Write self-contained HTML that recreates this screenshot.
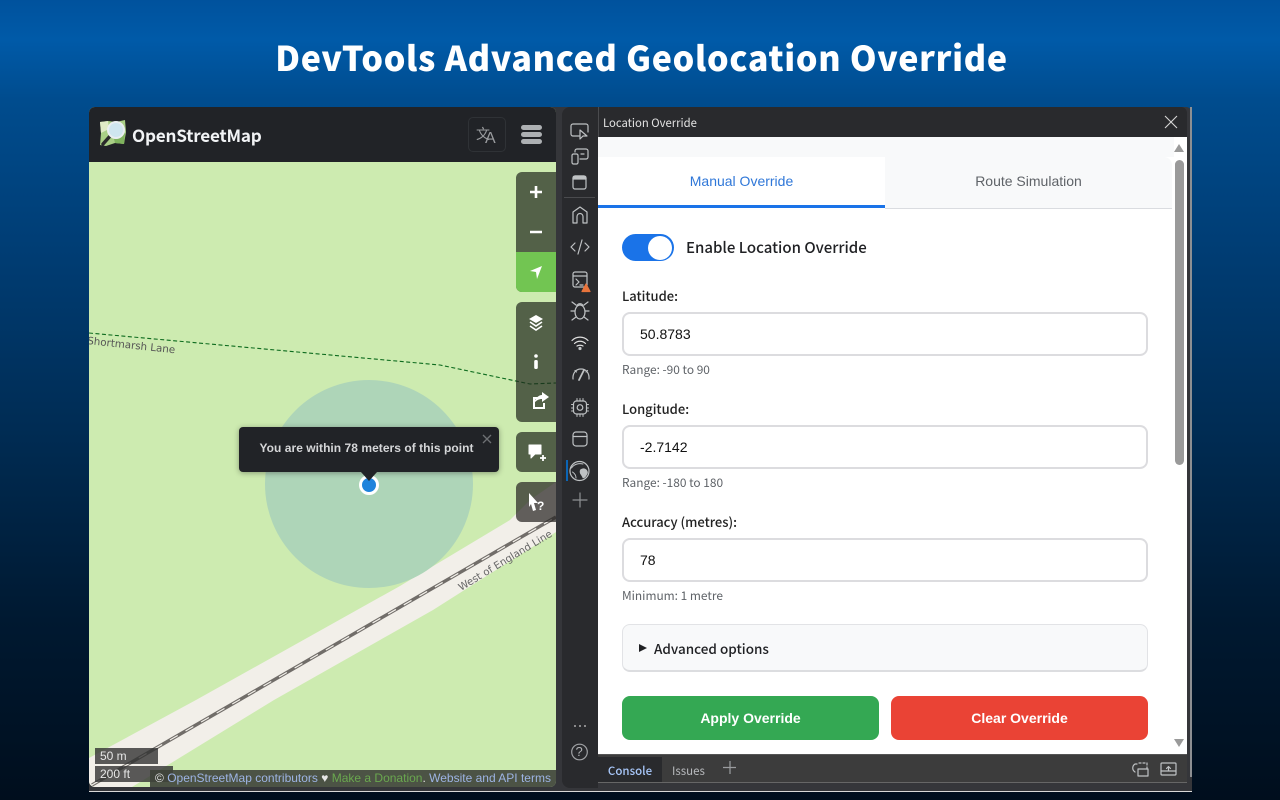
<!DOCTYPE html>
<html><head><meta charset="utf-8"><title>DevTools Advanced Geolocation Override</title>
<style>
*{box-sizing:border-box;margin:0;padding:0}
html,body{width:1280px;height:800px;overflow:hidden}
body{position:relative;font-family:"Liberation Sans",sans-serif;background:linear-gradient(180deg,#00529d 0,#005aa8 40px,#004c8e 100px,#003d74 250px,#002a50 450px,#001931 620px,#000e1d 800px)}
.a{position:absolute}
h1{position:absolute;left:0;width:1283px;top:35px;text-align:center;color:#fff;font:900 34px/44px "Noto Sans CJK SC","Liberation Sans",sans-serif;letter-spacing:.7px}
.seg{font-family:"Noto Sans CJK SC","Liberation Sans",sans-serif}
.ctl{position:absolute;left:516px;width:40px;background:rgba(32,38,28,.7);border-radius:6px 0 0 6px}
.inp{position:absolute;left:622px;width:526px;height:44px;border:2px solid #dcdcdf;border-radius:8px;background:#fff;font-size:14px;line-height:40px;padding-left:16px;color:#111}
.lbl{position:absolute;left:622px;font:500 13px/18px "Noto Sans CJK SC","Liberation Sans",sans-serif;color:#222}
.hint{position:absolute;left:622px;font:400 11.9px/16px "Noto Sans CJK SC","Liberation Sans",sans-serif;color:#5f6368}
.btn{position:absolute;top:696px;height:44px;width:257px;border-radius:8px;color:#fff;font:700 14px/44px "Liberation Sans",sans-serif;text-align:center}
svg{position:absolute;overflow:visible}
.ic{fill:none;stroke:#bfc2c4;stroke-width:1.2;stroke-linecap:round;stroke-linejoin:round}
</style></head><body>
<h1>DevTools Advanced Geolocation Override</h1>

<div class="a" style="left:89px;top:107px;width:1103px;height:685px;background:#35363a;border-radius:6px 6px 0 0"></div>
<div class="a" style="left:89px;top:791px;width:1103px;height:1px;background:#d8d8d8"></div>
<div class="a" style="left:1190px;top:107px;width:2px;height:670px;background:#8d8f92"></div>

<!-- Map -->
<div class="a" style="left:89px;top:107px;width:467px;height:680px;background:#cdebb0;border-radius:6px;overflow:hidden">
 <svg width="467" height="680" style="left:0;top:0">
  <g transform="translate(-89,-107)">
   <polygon points="89,758 196,700 400,586 510,520 530,500 556,482 556,532 433,610 274,700 132,787 89,800" fill="#f2efe9"/>
   <circle cx="369" cy="484" r="104" fill="#aed5b8"/>
   <path d="M92 785L556 517" stroke="#716d69" stroke-width="3.400" fill="none"/>
   <path d="M92 785L556 517" stroke="#f2efe9" stroke-width="1.200" stroke-dasharray="9 9" fill="none"/>
   <path d="M89 333L440 365L530 384L556 383" stroke="#0d6b1e" stroke-width="1.100" stroke-dasharray="4 2.500" fill="none"/>
   <text x="0" y="0" transform="translate(87,344) rotate(6)" font-family="DejaVu Sans" font-size="10.300" fill="#555">Shortmarsh Lane</text>
   <text x="0" y="0" transform="translate(461,591) rotate(-31)" font-family="DejaVu Sans" font-size="10.200" fill="#666">West of England Line</text>
  </g>
 </svg>
</div>

<!-- OSM header -->
<div class="a" style="left:89px;top:107px;width:467px;height:55px;background:#212327;border-radius:6px 6px 0 0"></div>
<svg width="30" height="30" style="left:98px;top:119px">
 <path d="M2 3L10 2L18 3L27 1L28 13L26 25L17 24L8 27L2 26L3 14Z" fill="#a9cf86"/>
 <path d="M2 3L10 2L11 10L3 14Z" fill="#dfeac6"/><path d="M16 20L27 14L26 25L17 24Z" fill="#7fb35e"/>
 <path d="M13 16L5 25" stroke="#2a2a2a" stroke-width="3.400" stroke-linecap="round"/>
 <circle cx="18" cy="11" r="8" fill="#cfe6ef" stroke="#e9eef0" stroke-width="2"/>
</svg>
<div class="a seg" style="left:132px;top:122px;font-size:17.100px;line-height:26px;font-weight:700;color:#f1f3f5;letter-spacing:-.2px">OpenStreetMap</div>
<div class="a" style="left:468px;top:117px;width:38px;height:35px;border:1px solid #2f3236;border-radius:5px"></div>
<div class="a" style="left:476px;top:125px;font:14px/18px 'Noto Sans CJK SC',sans-serif;color:#9a9c9f">文</div>
<div class="a" style="left:485px;top:130px;font:16px/18px 'Liberation Sans',sans-serif;color:#9a9c9f">A</div>
<div class="a" style="left:521px;top:125px;width:21px;height:5px;border-radius:3px;background:#adb0b3"></div>
<div class="a" style="left:521px;top:132px;width:21px;height:5px;border-radius:3px;background:#adb0b3"></div>
<div class="a" style="left:521px;top:139px;width:21px;height:5px;border-radius:3px;background:#adb0b3"></div>

<!-- Map controls -->
<div class="ctl" style="top:172px;height:120px"></div>
<div class="a" style="left:516px;top:252px;width:40px;height:40px;background:#72c552;border-radius:0 0 0 6px"></div>
<div class="ctl" style="top:302px;height:120px"></div>
<div class="ctl" style="top:432px;height:40px"></div>
<div class="ctl" style="top:482px;height:40px;background:rgba(40,38,36,.72)"></div>
<svg width="40" height="350" style="left:516px;top:172px">
 <path d="M20 14V26M14 20H26M14 60H26" stroke="#fff" stroke-width="2.600" fill="none"/>
 <path d="M14 99L26 94L21 107L20 100Z" fill="#fff"/>
 <path d="M20 143L27 147L20 151L13 147Z" fill="#fff"/>
 <path d="M14 150L20 154L26 150M14 154L20 158L26 154" stroke="#fff" stroke-width="1.600" fill="none"/>
 <circle cx="20" cy="184" r="1.800" fill="#fff"/><rect x="18.200" y="188" width="3.600" height="9" rx="1.500" fill="#fff"/>
 <path d="M24 226H18V236H28V231" stroke="#fff" stroke-width="2" fill="none"/>
 <path d="M18 231C19 226 23 223 26 223V220L33 225L26 230V227C23 227 21 228 18 231Z" fill="#fff"/>
 <path d="M13 273H25V282H19L15 286V282H13Z" fill="#fff" stroke="#fff" stroke-linejoin="round"/>
 <path d="M27 283V289M24 286H30" stroke="#fff" stroke-width="1.800"/>
 <path d="M13 321L22 331L18 331L20 338L17 339L15 332L13 335Z" fill="#fff"/>
 <text x="21" y="338" font-size="12" font-weight="700" fill="#fff" font-family="Liberation Sans">?</text>
</svg>

<!-- Popup -->
<div class="a" style="left:239px;top:427px;width:260px;height:45px;background:#212327;border-radius:4px;box-shadow:0 1px 6px rgba(0,0,0,.35);color:#d5d6d8;font:700 12px/43px 'Liberation Sans',sans-serif;text-align:center;padding-right:5px;letter-spacing:.04px">You are within 78 meters of this point</div>
<svg width="10" height="10" style="left:483px;top:435px"><path d="M0 0L8 8M8 0L0 8" stroke="#6d7073" stroke-width="1.300"/></svg>
<div class="a" style="left:359px;top:475px;width:20px;height:20px;border-radius:50%;background:#1f83dc;border:3px solid #fff"></div>
<div class="a" style="left:361px;top:472px;width:0;height:0;border-left:8px solid transparent;border-right:8px solid transparent;border-top:9px solid #212327"></div>

<!-- Scale & attribution -->
<div class="a" style="left:95px;top:748px;width:63px;height:16px;background:rgba(50,50,50,.8);color:#e6e6e6;font:12px/16px 'Liberation Sans',sans-serif;padding-left:5px">50 m</div>
<div class="a" style="left:95px;top:766px;width:78px;height:16px;background:rgba(50,50,50,.8);color:#e6e6e6;font:12px/16px 'Liberation Sans',sans-serif;padding-left:5px">200 ft</div>
<div class="a" style="left:150px;top:770px;width:406px;height:17px;background:rgba(62,66,58,.9);border-radius:0 0 6px 0;font:12px/16px 'Liberation Sans',sans-serif;color:#e6e6e6;white-space:nowrap;padding-left:5px">© <span style="color:#9db4e4">OpenStreetMap contributors</span> ♥ <span style="color:#6aa84f">Make a Donation</span>. <span style="color:#9db4e4">Website and API terms</span></div>

<!-- DevTools sidebar -->
<div class="a" style="left:562px;top:107px;width:36px;height:681px;background:#292a2d;border-radius:8px 0 0 8px"></div>
<div class="a" style="left:564px;top:197px;width:31px;height:1px;background:#4a4b4e"></div>
<svg width="36" height="680" style="left:562px;top:107px" class="ic">
 <path d="M17 29H11a2 2 0 0 1-2-2V19a2 2 0 0 1 2-2H24a2 2 0 0 1 2 2V25"/><path d="M18 23L18 32L21 29L25 29Z"/>
 <path d="M13 45V44a2 2 0 0 1 2-2H24a2 2 0 0 1 2 2V50a2 2 0 0 1-2 2H18"/><rect x="10" y="47" width="6" height="10" rx="1.500"/><path d="M19 47H22"/>
 <rect x="11" y="69" width="13" height="13" rx="2"/><path d="M11 71a2 2 0 0 1 2-2H22a2 2 0 0 1 2 2V72H11Z" fill="#bfc2c4"/>
 <path d="M11 116V105L18 100L25 105V116H21V109.500a3 3 0 0 0-6 0V116Z"/>
 <path d="M13 136L9 140L13 144M23 136L27 140L23 144M20 133L16 147"/>
 <rect x="11" y="165" width="14" height="15" rx="2"/><path d="M11 169H25M14 172L17 175L14 178M18 178H21"/>
 <path d="M24 177L28 184.500H20Z" fill="#e8743c" stroke="#e8743c"/>
 <ellipse cx="18" cy="205" rx="5" ry="7"/><path d="M14 198L10 195M22 198L26 195M13 204H9M23 204H27M14 210L10 213M22 210L26 213M15 199C15 196 21 196 21 199"/>
 <path d="M10 233.500C14.500 229 21.500 229 26 233.500M12.500 236.500C15.500 233.500 20.500 233.500 23.500 236.500M15 239C16.500 238 19.500 238 21 239" stroke="#e0e0e0"/><circle cx="18" cy="241.500" r="1" fill="#e0e0e0"/>
 <path d="M11 272C10.500 266 14 262 19 262C24 262 27.500 266 27 272M14.500 265L13 263.500M24 265L25.500 263.500"/>
 <path d="M22 263L17 273" stroke-width="1.800"/>
 <rect x="11.500" y="294" width="13" height="13" rx="3"/><circle cx="18" cy="300.500" r="2.800"/><path d="M15 291.500V294M18 291.500V294M21 291.500V294M15 307V309.500M18 307V309.500M21 307V309.500M9.500 297.500H11.500M9.500 301H11.500M9.500 304H11.500M24.500 297.500H26.500M24.500 301H26.500M24.500 304H26.500" stroke-width="1"/>
 <rect x="11" y="325" width="14" height="14" rx="3"/><path d="M11 329.500H25"/>
 <circle cx="17.500" cy="364" r="9.500"/>
 <path d="M9.500 361C12 357 17 356 21 357" stroke-width="1"/>
 <path d="M20 362C23 361 25.500 363 25.500 366C24 369 23 371 21 371C20 368 18 367 18 365C18 363 19 362 20 362Z" fill="#bfc2c4" stroke-width=".6"/>
 <path d="M10.500 365C12 366 14 368 14 371" stroke-width="1"/>
 <path d="M18 386V400M11 393H25" stroke="#8f9194"/>
 <circle cx="13" cy="619" r=".9" fill="#d0d0d0" stroke="none"/><circle cx="18" cy="619" r=".9" fill="#d0d0d0" stroke="none"/><circle cx="23" cy="619" r=".9" fill="#d0d0d0" stroke="none"/>
 <circle cx="17.500" cy="645" r="7.800" stroke="#a0a2a5"/>
</svg>
<div class="a" style="left:566px;top:460px;width:2px;height:21px;background:#0b65b5"></div>
<div class="a" style="left:575.500px;top:745px;font:13px/14px 'Liberation Sans',sans-serif;color:#b0b2b5">?</div>

<!-- DevTools header -->
<div class="a" style="left:598px;top:107px;width:589px;height:30px;background:#292a2d;border-left:1px solid #4a4b4e;color:#e3e3e3;font:11.300px/32px 'Noto Sans CJK SC','Liberation Sans',sans-serif;padding-left:4px;border-radius:0 6px 0 0">Location Override</div>
<svg width="14" height="14" style="left:1164px;top:115px"><path d="M1 1L13 13M13 1L1 13" stroke="#d6d6d6" stroke-width="1.100"/></svg>

<!-- Panel content -->
<div class="a" style="left:598px;top:137px;width:589px;height:617px;background:#fff"></div>
<div class="a" style="left:598px;top:137px;width:576px;height:20px;background:#f8f9fa"></div>
<div class="a" style="left:598px;top:157px;width:287px;height:51px;background:#fff;border-bottom:3px solid #1a73e8;border-radius:8px 0 0 0;color:#2f77d8;font:14px/48px 'Liberation Sans',sans-serif;text-align:center">Manual Override</div>
<div class="a" style="left:885px;top:157px;width:287px;height:52px;background:#f8f9fa;border-bottom:1px solid #dadce0;border-radius:0 8px 0 0;color:#5f6368;font:14px/48px 'Liberation Sans',sans-serif;text-align:center">Route Simulation</div>

<div class="a" style="left:622px;top:234px;width:52px;height:27px;border-radius:14px;background:#1a73e8"></div>
<div class="a" style="left:648px;top:235.500px;width:24px;height:24px;border-radius:50%;background:#fff"></div>
<div class="a seg" style="left:686px;top:237px;font-size:15px;line-height:22px;font-weight:500;color:#202124">Enable Location Override</div>

<div class="lbl" style="top:287px">Latitude:</div>
<div class="inp" style="top:312px">50.8783</div>
<div class="hint" style="top:362px">Range: -90 to 90</div>
<div class="lbl" style="top:400px">Longitude:</div>
<div class="inp" style="top:425px">-2.7142</div>
<div class="hint" style="top:475px">Range: -180 to 180</div>
<div class="lbl" style="top:513px">Accuracy (metres):</div>
<div class="inp" style="top:538px">78</div>
<div class="hint" style="top:588px">Minimum: 1 metre</div>

<div class="a" style="left:622px;top:624px;width:526px;height:48px;background:#f8f9fa;border:1px solid #e2e3e6;border-bottom:2px solid #dcdde0;border-radius:8px"></div>
<div class="a" style="left:639px;top:644px;width:0;height:0;border-left:8px solid #202124;border-top:4.500px solid transparent;border-bottom:4.500px solid transparent"></div>
<div class="a seg" style="left:654px;top:639px;font-size:13.500px;line-height:18px;font-weight:500;color:#202124">Advanced options</div>

<div class="btn" style="left:622px;background:#34a853">Apply Override</div>
<div class="btn" style="left:891px;background:#ea4335">Clear Override</div>

<!-- Scrollbar -->
<div class="a" style="left:1175px;top:160px;width:9px;height:305px;background:#9a9a9a;border-radius:5px"></div>
<div class="a" style="left:1174px;top:144px;width:0;height:0;border-left:5.500px solid transparent;border-right:5.500px solid transparent;border-bottom:8px solid #9a9a9a"></div>
<div class="a" style="left:1174px;top:739px;width:0;height:0;border-left:5.500px solid transparent;border-right:5.500px solid transparent;border-top:8px solid #9a9a9a"></div>

<!-- Bottom drawer -->
<div class="a" style="left:598px;top:754px;width:589px;height:28px;background:#3c3c3c;border-top:1px solid #555"></div>
<div class="a" style="left:598px;top:757px;width:64px;height:25px;background:#292a2d;color:#a8c7fa;font:500 11.500px/29px 'Noto Sans CJK SC','Liberation Sans',sans-serif;text-align:center">Console</div>
<div class="a" style="left:672px;top:757px;color:#b8babd;font:11.500px/29px 'Noto Sans CJK SC','Liberation Sans',sans-serif">Issues</div>
<div class="a" style="left:598px;top:782px;width:589px;height:6px;background:#35363a;border-top:1px solid #666"></div>
<svg width="14" height="14" style="left:723px;top:761px"><path d="M7 0V13M0 6.500H13" stroke="#9a9c9f" stroke-width="1.200"/></svg>
<svg width="60" height="20" style="left:1130px;top:760px" class="ic">
 <path d="M7 4H5C2 6 2 10 5 12"/><rect x="8" y="9" width="10" height="7"/><path d="M9 3H17V9" stroke-dasharray="2 2"/>
 <rect x="31" y="3" width="15" height="12" rx="1"/><path d="M31 11H46M38.500 11V7M36.500 8.500L38.500 6.500L40.500 8.500"/>
</svg>
</body></html>
